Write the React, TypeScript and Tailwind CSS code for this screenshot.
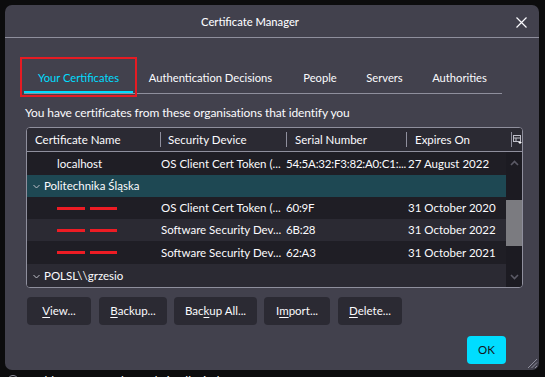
import React from "react";

const Chevron = ({ up }: { up?: boolean }) => (
  <svg width="9" height="6" viewBox="0 0 9 6" className="block">
    <path d={up ? "M1 5 L4.5 1.5 L8 5" : "M1 1 L4.5 4.5 L8 1"} fill="none" stroke="currentColor" strokeWidth="1.6" />
  </svg>
);

const SmallChevron = () => (
  <svg width="7" height="5" viewBox="0 0 7 5" className="block">
    <path d="M0.5 1 L3.5 4 L6.5 1" fill="none" stroke="currentColor" strokeWidth="1" />
  </svg>
);

const Dashes = () => (
  <div className="flex items-center gap-[5px] pl-[30px]">
    <div className="w-[28px] h-[3px] bg-[#ed1c24]" />
    <div className="w-[27px] h-[3px] bg-[#ed1c24]" />
  </div>
);

type Row = {
  kind: "cert" | "group";
  name?: string;
  redacted?: boolean;
  device?: string;
  serial?: string;
  expires?: string;
  bg: string;
  h: string;
};

const rows: Row[] = [
  { kind: "cert", name: "localhost", device: "OS Client Cert Token (...", serial: "54:5A:32:F3:82:A0:C1:...", expires: "27 August 2022", bg: "bg-[#1f1e25]", h: "h-[23px]" },
  { kind: "group", name: "Politechnika Śląska", bg: "bg-[#1e4853]", h: "h-[22px]" },
  { kind: "cert", redacted: true, device: "OS Client Cert Token (...", serial: "60:9F", expires: "31 October 2020", bg: "bg-[#1f1e25]", h: "h-[22px]" },
  { kind: "cert", redacted: true, device: "Software Security Dev...", serial: "6B:28", expires: "31 October 2022", bg: "bg-[#2b2a33]", h: "h-[22px]" },
  { kind: "cert", redacted: true, device: "Software Security Dev...", serial: "62:A3", expires: "31 October 2021", bg: "bg-[#1f1e25]", h: "h-[23px]" },
  { kind: "group", name: "POLSL\\\\grzesio", bg: "bg-[#2b2a33]", h: "h-[23px]" },
];

const tabs = [
  { label: "Your Certificates", w: "w-[109px]", active: true },
  { label: "Authentication Decisions", w: "w-[155px]" },
  { label: "People", w: "w-[64px]" },
  { label: "Servers", w: "w-[65px]" },
  { label: "Authorities", w: "w-[85px]" },
];

export default function App() {
  return (
    <div className="w-[545px] h-[377px] bg-[#0c0c0d] overflow-hidden flex flex-col font-['Lato',sans-serif] text-[11.5px] text-[#fbfbfe]">
      <div className="ml-[5px] mt-[5px] w-[534px] h-[365px] shrink-0 rounded-[7px] bg-[#42414d] flex flex-col relative">
        {/* Title bar */}
        <div className="h-[33px] shrink-0 flex items-center pt-[3px] border-b border-[#8f8f9d]">
          <div className="flex-1 text-center text-[11.2px] font-medium">Certificate Manager</div>
          <div className="w-[44px] flex justify-end pr-[12px]">
            <svg width="11" height="11" viewBox="0 0 11 11">
              <path d="M0.5 0.5 L10.5 10.5 M10.5 0.5 L0.5 10.5" stroke="#fbfbfe" strokeWidth="1.2" />
            </svg>
          </div>
        </div>

        {/* Tabs */}
        <div className="ml-[19px] mt-[19px] self-start flex h-[37px] border-b border-[#8f8f9d] relative text-[11.2px]">
          {tabs.map((t) => (
            <div key={t.label} className={`${t.w} relative flex items-center justify-center pt-[6px] whitespace-nowrap ${t.active ? "text-[#00ddff]" : "text-[#fbfbfe]"}`}>
              {t.label}
              {t.active && <div className="absolute left-0 right-0 bottom-0 h-[2px] bg-[#00ddff]" />}
            </div>
          ))}
          <div className="absolute left-[-4px] top-0 w-[117px] h-[40px] border-2 border-[#e51b23] pointer-events-none" />
        </div>

        {/* Description */}
        <div className="ml-[20px] mt-[11px] leading-[16px] whitespace-nowrap text-[12px] tracking-[-0.1px]">You have certificates from these organisations that identify you</div>

        {/* Table */}
        <div className="ml-[21px] mt-[6px] w-[497px] h-[161px] shrink-0 border border-[#8f8f9d] rounded-[4px] overflow-hidden flex flex-col bg-[#1f1e25]">
          <div className="h-[24px] shrink-0 flex items-center border-b border-[#8f8f9d] bg-[#2b2a33]">
            <div className="w-[133px] shrink-0 pl-[8px] whitespace-nowrap">Certificate Name</div>
            <div className="w-[126px] shrink-0 flex items-center">
              <div className="w-px h-[15px] bg-[#8f8f9d]" />
              <span className="pl-[7px] whitespace-nowrap">Security Device</span>
            </div>
            <div className="w-[120px] shrink-0 flex items-center">
              <div className="w-px h-[15px] bg-[#8f8f9d]" />
              <span className="pl-[8px] whitespace-nowrap">Serial Number</span>
            </div>
            <div className="w-[105px] shrink-0 flex items-center">
              <div className="w-px h-[15px] bg-[#8f8f9d]" />
              <span className="pl-[8px] whitespace-nowrap">Expires On</span>
            </div>
            <div className="flex-1 flex items-center">
              <div className="w-px h-[15px] bg-[#8f8f9d]" />
              <svg width="9" height="9" viewBox="0 0 9 9" className="ml-[1px]">
                <rect x="0.5" y="0.5" width="7" height="6" fill="none" stroke="#bfbfc9" strokeWidth="1" />
                <path d="M0.5 3 H7.5 M3 3 V6.5" stroke="#bfbfc9" strokeWidth="1" />
                <path d="M5 7 H9 L7 9 Z" fill="#fbfbfe" />
              </svg>
            </div>
          </div>
          <div className="flex flex-1 min-h-0">
            <div className="w-[479px] shrink-0 flex flex-col">
              {rows.map((r, i) => (
                <div key={i} className={`${r.h} ${r.bg} shrink-0 flex items-center whitespace-nowrap`}>
                  {r.kind === "group" ? (
                    <div className="flex items-center pl-[6px]">
                      <span className="text-[#bfbfc9] w-[7px] flex justify-center mt-[1px]"><SmallChevron /></span>
                      <span className="pl-[4px]">{r.name}</span>
                    </div>
                  ) : (
                    <>
                      <div className="w-[134px] shrink-0 overflow-hidden">
                        {r.redacted ? <Dashes /> : <span className="pl-[30px]">{r.name}</span>}
                      </div>
                      <div className="w-[125px] shrink-0 overflow-hidden">{r.device}</div>
                      <div className="w-[122px] shrink-0 overflow-hidden tracking-[-0.2px]">{r.serial}</div>
                      <div className="flex-1 overflow-hidden">{r.expires}</div>
                    </>
                  )}
                </div>
              ))}
            </div>
            <div className="flex-1 bg-[#1c1b22] flex flex-col items-center">
              <div className="h-[14px] flex items-end text-[#5b5a66]"><Chevron up /></div>
              <div className="mt-[34px] w-full h-[46px] bg-[#7b7b80]" />
              <div className="mt-[28px] text-[#5b5a66]"><Chevron /></div>
            </div>
          </div>
        </div>

        {/* Buttons */}
        <div className="ml-[22px] mt-[9px] flex">
          {[
            { pre: "", u: "V", post: "iew...", w: "w-[64px]", ml: "" },
            { pre: "", u: "B", post: "ackup...", w: "w-[68px]", ml: "ml-[8px]" },
            { pre: "Bac", u: "k", post: "up All...", w: "w-[83px]", ml: "ml-[7px]" },
            { pre: "I", u: "m", post: "port...", w: "w-[66px]", ml: "ml-[7px]" },
            { pre: "", u: "D", post: "elete...", w: "w-[64px]", ml: "ml-[8px]" },
          ].map((b) => (
            <div key={b.pre + b.u + b.post} className={`${b.w} ${b.ml} h-[28px] rounded-[4px] bg-[#2b2a33] flex items-center justify-center whitespace-nowrap`}>
              {b.pre}
              <span className="underline underline-offset-2">{b.u}</span>
              {b.post}
            </div>
          ))}
        </div>

        {/* OK */}
        <div className="mt-[11px] self-end mr-[33px] w-[39px] h-[28px] rounded-[4px] bg-[#00ddff] text-[#15141a] flex items-center justify-center">
          OK
        </div>

        {/* Resize grip */}
        <svg width="13" height="13" viewBox="0 0 13 13" className="absolute right-[1px] bottom-[1px]">
          <path d="M12 3 L3 12 M12 6.5 L6.5 12 M12 10 L10 12" stroke="#8f8f9d" strokeWidth="1" />
        </svg>
      </div>

      {/* Background page text */}
      <div className="flex items-center h-[16px] leading-[16px] pl-[7px] text-[#fbfbfe] whitespace-nowrap text-[12px]">
        <div className="w-[12px] h-[12px] rounded-full border border-[#8f8f9d] mt-[6px]" />
        <span className="ml-[6px] mt-[6px]">Enable HTTPS-Only Mode in all windows</span>
      </div>
    </div>
  );
}
